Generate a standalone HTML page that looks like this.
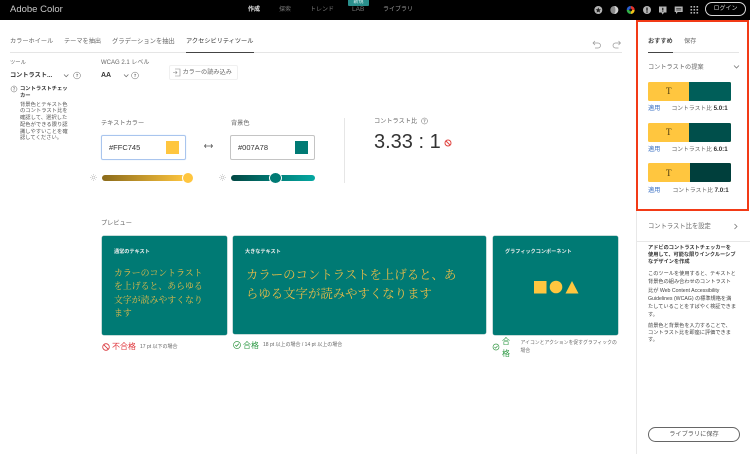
<!DOCTYPE html>
<html lang="ja"><head><meta charset="utf-8"><title>Adobe Color</title>
<style>
html,body{margin:0;padding:0;background:#fff}
body{width:750px;height:454px;overflow:hidden;position:relative;font-family:"Liberation Sans","Noto Sans CJK JP",sans-serif;color:#2c2c2c}
.a,.a *{box-sizing:border-box}
.a{position:absolute;white-space:nowrap;line-height:1}
.g{color:#666}
.b{font-weight:700}
svg{position:absolute;overflow:visible}
.serif{font-family:"Liberation Serif","Noto Serif CJK SC",serif}
.card{background:#007a74;border-radius:2px;box-shadow:0 0 0 .5px #8fb8b6}
.ty{color:#e6bb48;font-family:"Noto Serif CJK SC",serif;white-space:nowrap}
</style></head><body>

<div class="a" style="left:0;top:0;width:750px;height:20px;background:#000"></div>
<div class="a" style="left:10px;top:4px;font-size:9.5px;color:#c8c8c8;line-height:12px">Adobe Color</div>
<div class="a b" style="left:248px;top:5.500px;font-size:6px;color:#e8e8e8;line-height:8px">作成</div>
<div class="a" style="left:279px;top:5.500px;font-size:6px;color:#777;line-height:8px">探索</div>
<div class="a" style="left:310px;top:5.500px;font-size:6px;color:#777;line-height:8px">トレンド</div>
<div class="a" style="left:348px;top:0;width:21px;height:6px;background:#2a8f8c;border-radius:0 0 1px 1px;font-size:5px;color:#d8eeee;text-align:center;line-height:5px">新規</div>
<div class="a" style="left:352px;top:6px;font-size:6.500px;color:#777;line-height:7px">LAB</div>
<div class="a" style="left:383px;top:5.500px;font-size:6px;color:#999;line-height:8px">ライブラリ</div>

<svg style="left:593px;top:5px" width="110" height="11" viewBox="0 0 110 11">
<g transform="translate(0.300,0)"><circle cx="5" cy="5" r="4" fill="#b5b5b5"/><path d="M5 2.400l.8 1.800 1.900.2-1.400 1.200.4 1.900L5 6.600l-1.700.9.4-1.900-1.400-1.200 1.900-.2z" fill="#222"/></g>
<g transform="translate(1.300,0)"><circle cx="20" cy="5" r="4" fill="#8a8a8a"/><path d="M20 1a4 4 0 0 1 0 8c1.500-2 1.500-6 0-8z" fill="#d0d0d0"/></g>
<g transform="translate(2.200,0)"><path d="M35.500 5V1a4 4 0 0 1 4 4z" fill="#e6342a"/><path d="M35.500 5h4a4 4 0 0 1-4 4z" fill="#f2c21a"/><path d="M35.500 5v4a4 4 0 0 1-4-4z" fill="#32b24a"/><path d="M35.500 5h-4a4 4 0 0 1 4-4z" fill="#2b5fd0"/><circle cx="35.500" cy="5" r="1.400" fill="#111"/></g>
<g transform="translate(3,0)"><circle cx="51" cy="5" r="4" fill="#b5b5b5"/><rect x="50.300" y="2.500" width="1.400" height="3.200" fill="#222"/><rect x="50.300" y="6.400" width="1.400" height="1.300" fill="#222"/></g>
<g transform="translate(4,0)"><path d="M62 1.500h7.500v6h-2.500l-1.300 2-1.300-2h-2.400z" fill="#b5b5b5"/><rect x="65.100" y="2.800" width="1.300" height="2.300" fill="#222"/><rect x="65.100" y="5.600" width="1.300" height="1" fill="#222"/></g>
<g transform="translate(5.700,0)"><path d="M76 1.500h8v5.500h-5l-1.700 2V7H76z" fill="#b5b5b5"/><path d="M77.500 3.300h5M77.500 5h5" stroke="#222" stroke-width=".7"/></g>
<g fill="#b5b5b5" transform="translate(7.500,0)"><rect x="90" y="1" width="1.600" height="1.600"/><rect x="93" y="1" width="1.600" height="1.600"/><rect x="96" y="1" width="1.600" height="1.600"/><rect x="90" y="4" width="1.600" height="1.600"/><rect x="93" y="4" width="1.600" height="1.600"/><rect x="96" y="4" width="1.600" height="1.600"/><rect x="90" y="7" width="1.600" height="1.600"/><rect x="93" y="7" width="1.600" height="1.600"/><rect x="96" y="7" width="1.600" height="1.600"/></g>
</svg>
<div class="a" style="left:705px;top:2px;width:41px;height:14px;border:1px solid #d8d8d8;border-radius:7px;font-size:6px;color:#ccc;text-align:center;line-height:12px">ログイン</div>

<div class="a g" style="left:10px;top:37px;font-size:6.200px;line-height:9px">カラーホイール</div>
<div class="a g" style="left:64px;top:37px;font-size:6.200px;line-height:9px">テーマを抽出</div>
<div class="a g" style="left:112px;top:37px;font-size:6.300px;line-height:9px">グラデーションを抽出</div>
<div class="a" style="left:186px;top:37px;font-size:6.200px;line-height:9px;color:#333">アクセシビリティツール</div>
<div class="a" style="left:10px;top:52px;width:612px;height:1px;background:#e5e5e5"></div>
<div class="a" style="left:186px;top:51.500px;width:68px;height:1.500px;background:#444"></div>
<svg style="left:592px;top:39px" width="30" height="10" viewBox="0 0 30 10"><path d="M3 2L1 4l2 2M1.200 4H6a2.200 2.200 0 0 1 0 5H3" fill="none" stroke="#999" stroke-width=".7"/><path d="M26.500 2l2 2-2 2M28.300 4H23.500a2.200 2.200 0 0 0 0 5h3" fill="none" stroke="#999" stroke-width=".7"/></svg>

<div class="a g" style="left:10px;top:60px;font-size:5.300px;line-height:7px">ツール</div>
<div class="a b" style="left:10px;top:71px;font-size:6.200px;line-height:9px;color:#333">コントラスト...</div>
<svg style="left:62px;top:71px" width="20" height="10" viewBox="0 0 20 10"><path d="M2 3.500l2.200 2.200 2.200-2.200" fill="none" stroke="#666" stroke-width=".7"/><circle cx="15" cy="4.500" r="3.400" fill="none" stroke="#666" stroke-width=".5"/><path d="M14 3.200h2L15 4.500V6" fill="none" stroke="#666" stroke-width=".5"/></svg>
<div class="a g" style="left:101px;top:60px;font-size:6px;line-height:7px">WCAG 2.1 レベル</div>
<div class="a b" style="left:101px;top:71px;font-size:7px;line-height:9px;color:#333">AA</div>
<svg style="left:122px;top:71px" width="20" height="10" viewBox="0 0 20 10"><path d="M2 3.500l2.200 2.200 2.200-2.200" fill="none" stroke="#666" stroke-width=".7"/><circle cx="13" cy="4.500" r="3.400" fill="none" stroke="#666" stroke-width=".5"/><path d="M12 3.200h2L13 4.500V6" fill="none" stroke="#666" stroke-width=".5"/></svg>
<div class="a" style="left:169px;top:65px;width:69px;height:15px;border:1px solid #f0f0f0;border-radius:2px"></div>
<svg style="left:172px;top:68px" width="9" height="9" viewBox="0 0 9 9"><path d="M3 1h5v7H3M1 4.500h4M3.500 3l1.500 1.500L3.500 6" fill="none" stroke="#888" stroke-width=".6"/></svg>
<div class="a g" style="left:182.500px;top:68px;font-size:6.200px;line-height:9px">カラーの読み込み</div>
<svg style="left:10px;top:85px" width="8" height="8" viewBox="0 0 8 8"><circle cx="4" cy="4" r="3" fill="none" stroke="#666" stroke-width=".5"/><path d="M3 2.800h2L4 4v1.600" fill="none" stroke="#666" stroke-width=".5"/></svg>
<div class="a b" style="left:20px;top:85.500px;font-size:5.300px;line-height:7px;color:#333">コントラストチェッ<br>カー</div>
<div class="a" style="left:20px;top:101.700px;font-size:5.300px;line-height:6.700px;color:#555">背景色とテキスト色<br>のコントラスト比を<br>確認して、選択した<br>配色ができる限り認<br>識しやすいことを確<br>認してください。</div>

<div class="a g" style="left:101px;top:119px;font-size:6.200px;line-height:9px">テキストカラー</div>
<div class="a" style="left:101px;top:135px;width:85px;height:25px;border:1px solid #a9c5ee;border-radius:2px;box-shadow:0 0 1px #c8dbf5"></div>
<div class="a" style="left:109px;top:143px;font-size:7.500px;line-height:9px;color:#333">#FFC745</div>
<div class="a" style="left:166px;top:141px;width:13px;height:13px;background:#ffc63f"></div>
<svg style="left:89px;top:173px" width="9" height="9" viewBox="0 0 9 9"><circle cx="4.500" cy="4.500" r="1.500" fill="none" stroke="#aaa" stroke-width=".5"/><path d="M4.500 1v1M4.500 7v1M1 4.500h1M7 4.500h1M2 2l.7.7M6.300 6.300l.7.7M7 2l-.7.7M2.700 6.300L2 7" stroke="#aaa" stroke-width=".5"/></svg>
<div class="a" style="left:102px;top:175px;width:84px;height:6px;border-radius:3px;background:linear-gradient(90deg,#8a6a1a,#ffc63f)"></div>
<div class="a" style="left:182px;top:172px;width:12px;height:12px;border-radius:50%;background:#ffc63f;border:1px solid #fff"></div>

<svg style="left:204px;top:143px" width="9" height="6" viewBox="0 0 9 6"><path d="M.5 3h8M2 1.300L.5 3 2 4.700M7 1.300L8.500 3 7 4.700" fill="none" stroke="#555" stroke-width=".8"/></svg>

<div class="a g" style="left:231px;top:119px;font-size:6.200px;line-height:9px">背景色</div>
<div class="a" style="left:230px;top:135px;width:85px;height:25px;border:1px solid #c4c4c4;border-radius:2px"></div>
<div class="a" style="left:238px;top:143px;font-size:7.500px;line-height:9px;color:#333">#007A78</div>
<div class="a" style="left:295px;top:141px;width:13px;height:13px;background:#007a74"></div>
<svg style="left:218px;top:173px" width="9" height="9" viewBox="0 0 9 9"><circle cx="4.500" cy="4.500" r="1.500" fill="none" stroke="#aaa" stroke-width=".5"/><path d="M4.500 1v1M4.500 7v1M1 4.500h1M7 4.500h1M2 2l.7.7M6.300 6.300l.7.7M7 2l-.7.7M2.700 6.300L2 7" stroke="#aaa" stroke-width=".5"/></svg>
<div class="a" style="left:231px;top:175px;width:84px;height:6px;border-radius:3px;background:linear-gradient(90deg,#024743,#007a74 50%,#05a8a2)"></div>
<div class="a" style="left:269px;top:172px;width:13px;height:12px;border-radius:50%;background:#007a74;border:1px solid #fff"></div>

<div class="a" style="left:344px;top:118px;width:1px;height:65px;background:#e6e6e6"></div>
<div class="a g" style="left:374px;top:117px;font-size:6.200px;line-height:9px">コントラスト比</div>
<svg style="left:420px;top:117px" width="9" height="9" viewBox="0 0 9 9"><circle cx="4.500" cy="4" r="3" fill="none" stroke="#666" stroke-width=".5"/><path d="M3.500 2.900h2L4.500 4v1.500" fill="none" stroke="#666" stroke-width=".5"/></svg>
<div class="a" style="left:374px;top:130px;font-size:20px;line-height:24px;color:#333">3.33 : 1</div>
<svg style="left:444px;top:139px" width="8" height="8" viewBox="0 0 8 8"><circle cx="4" cy="4" r="3" fill="none" stroke="#e0433f" stroke-width="1"/><path d="M2 2l4 4" stroke="#e0433f" stroke-width="1"/></svg>

<div class="a g" style="left:101px;top:220px;font-size:6.200px;line-height:8px">プレビュー</div>

<div class="a card" style="left:102px;top:236px;width:125px;height:99px"></div>
<div class="a b" style="left:114px;top:249px;font-size:5.150px;line-height:6px;color:#eee">通常のテキスト</div>
<div class="a ty" style="left:114px;top:265.500px;font-size:8.900px;line-height:13.500px">カラーのコントラスト<br>を上げると、あらゆる<br>文字が読みやすくなり<br>ます</div>
<svg style="left:101px;top:342px" width="10" height="10" viewBox="0 0 10 10"><circle cx="5" cy="5" r="3.300" fill="none" stroke="#d8343a" stroke-width=".8"/><path d="M2.700 2.700l4.600 4.600" stroke="#d8343a" stroke-width=".8"/></svg>
<div class="a" style="left:112px;top:342px;font-size:8px;line-height:10px;color:#e0373d">不合格</div>
<div class="a g" style="left:140px;top:344px;font-size:5px;line-height:7px">17 pt 以下の場合</div>

<div class="a card" style="left:233px;top:236px;width:253px;height:98px"></div>
<div class="a b" style="left:245px;top:249px;font-size:5.150px;line-height:6px;color:#eee">大きなテキスト</div>
<div class="a ty" style="left:246px;top:264.500px;font-size:12.400px;line-height:19px">カラーのコントラストを上げると、あ<br>らゆる文字が読みやすくなります</div>
<svg style="left:232px;top:340px" width="10" height="10" viewBox="0 0 10 10"><circle cx="5" cy="5" r="3.500" fill="none" stroke="#3a9a4a" stroke-width=".7"/><path d="M3.200 5l1.300 1.300 2.300-2.600" fill="none" stroke="#3a9a4a" stroke-width=".8"/></svg>
<div class="a" style="left:243px;top:340.500px;font-size:8px;line-height:10px;color:#2f9a46">合格</div>
<div class="a g" style="left:263px;top:342px;font-size:5px;line-height:7px">18 pt 以上の場合 / 14 pt 以上の場合</div>

<div class="a card" style="left:493px;top:236px;width:125px;height:99px"></div>
<div class="a b" style="left:505px;top:249px;font-size:5.150px;line-height:6px;color:#eee">グラフィックコンポーネント</div>
<svg style="left:534px;top:280px" width="46" height="14" viewBox="0 0 46 14"><rect x="0" y="1" width="12.500" height="12.500" fill="#ffc63f"/><circle cx="22" cy="7" r="6.300" fill="#ffc63f"/><path d="M38 1l6.500 12.500H31.500z" fill="#ffc63f"/></svg>
<svg style="left:491px;top:342px" width="10" height="10" viewBox="0 0 10 10"><circle cx="5" cy="5" r="3" fill="none" stroke="#3a9a4a" stroke-width=".7"/><path d="M3.500 5l1.100 1.100 2-2.200" fill="none" stroke="#3a9a4a" stroke-width=".7"/></svg>
<div class="a" style="left:502px;top:336px;font-size:8px;line-height:11.500px;color:#2f9a46">合<br>格</div>
<div class="a g" style="left:520.500px;top:340px;font-size:4.850px;line-height:8px">アイコンとアクションを促すグラフィックの<br>場合</div>

<div class="a" style="left:636px;top:20px;width:1px;height:434px;background:#e8e8e8"></div>
<div class="a" style="left:636px;top:20px;width:113px;height:190.500px;border:2px solid #f23a16"></div>
<div class="a b" style="left:648px;top:37px;font-size:6.200px;line-height:9px;color:#444">おすすめ</div>
<div class="a g" style="left:684px;top:37px;font-size:6.200px;line-height:9px">保存</div>
<div class="a" style="left:648px;top:52px;width:91px;height:1px;background:#e5e5e5"></div>
<div class="a" style="left:648px;top:51.500px;width:25px;height:1.500px;background:#444"></div>
<div class="a g" style="left:648px;top:63px;font-size:6.200px;line-height:9px">コントラストの提案</div>
<svg style="left:733px;top:64px" width="7" height="6" viewBox="0 0 7 6"><path d="M1 1.500l2.500 2.500L6 1.500" fill="none" stroke="#777" stroke-width=".8"/></svg>

<div class="a" style="left:648px;top:81.500px;width:83px;height:19px;background:#ffc63f;border-radius:1.500px"></div>
<div class="a" style="left:689px;top:81.500px;width:42px;height:19px;background:#005e59;border-radius:0 1.500px 1.500px 0"></div>
<div class="a serif" style="left:666px;top:86px;font-size:9px;line-height:10px;color:#4a3a10">T</div>
<div class="a" style="left:648px;top:105px;font-size:6.200px;line-height:8px;color:#3a70c4">適用</div>
<div class="a g" style="left:671.500px;top:105px;font-size:5.800px;line-height:8px">コントラスト比 <span class="b" style="color:#333;font-size:6.200px">5.0:1</span></div>

<div class="a" style="left:648px;top:122.500px;width:83px;height:19px;background:#ffc63f;border-radius:1.500px"></div>
<div class="a" style="left:689px;top:122.500px;width:42px;height:19px;background:#004f4b;border-radius:0 1.500px 1.500px 0"></div>
<div class="a serif" style="left:666px;top:127px;font-size:9px;line-height:10px;color:#4a3a10">T</div>
<div class="a" style="left:648px;top:146px;font-size:6.200px;line-height:8px;color:#3a70c4">適用</div>
<div class="a g" style="left:671.500px;top:146px;font-size:5.800px;line-height:8px">コントラスト比 <span class="b" style="color:#333;font-size:6.200px">6.0:1</span></div>

<div class="a" style="left:648px;top:163px;width:83px;height:19px;background:#ffc63f;border-radius:1.500px"></div>
<div class="a" style="left:690px;top:163px;width:41px;height:19px;background:#003f3c;border-radius:0 1.500px 1.500px 0"></div>
<div class="a serif" style="left:666px;top:168px;font-size:9px;line-height:10px;color:#4a3a10">T</div>
<div class="a" style="left:648px;top:187px;font-size:6.200px;line-height:8px;color:#3a70c4">適用</div>
<div class="a g" style="left:672.500px;top:187px;font-size:5.800px;line-height:8px">コントラスト比 <span class="b" style="color:#333;font-size:6.200px">7.0:1</span></div>

<div class="a g" style="left:648px;top:222px;font-size:6.300px;line-height:9px">コントラスト比を設定</div>
<svg style="left:733px;top:223px" width="6" height="7" viewBox="0 0 6 7"><path d="M1.500 1L4 3.500 1.500 6" fill="none" stroke="#777" stroke-width=".8"/></svg>
<div class="a" style="left:637px;top:241px;width:113px;height:1px;background:#e8e8e8"></div>
<div class="a b" style="left:648px;top:244.700px;font-size:5.200px;line-height:7.200px;color:#333">アドビのコントラストチェッカーを<br>使用して、可能な限りインクルーシブ<br>なデザインを作成</div>
<div class="a" style="left:648px;top:270.200px;font-size:5.200px;line-height:8.200px;color:#444">このツールを使用すると、テキストと<br>背景色の組み合わせのコントラスト<br>比が Web Content Accessibility<br>Guidelines (WCAG) の標準規格を満<br>たしていることをすばやく検証できま<br>す。</div>
<div class="a" style="left:648px;top:323.200px;font-size:5.200px;line-height:7px;color:#444">前景色と背景色を入力することで、<br>コントラスト比を即座に評価できま<br>す。</div>
<div class="a" style="left:648px;top:427px;width:92px;height:15px;border:1px solid #666;border-radius:7.500px;font-size:6.200px;line-height:13px;text-align:center;color:#555">ライブラリに保存</div>

</body></html>
